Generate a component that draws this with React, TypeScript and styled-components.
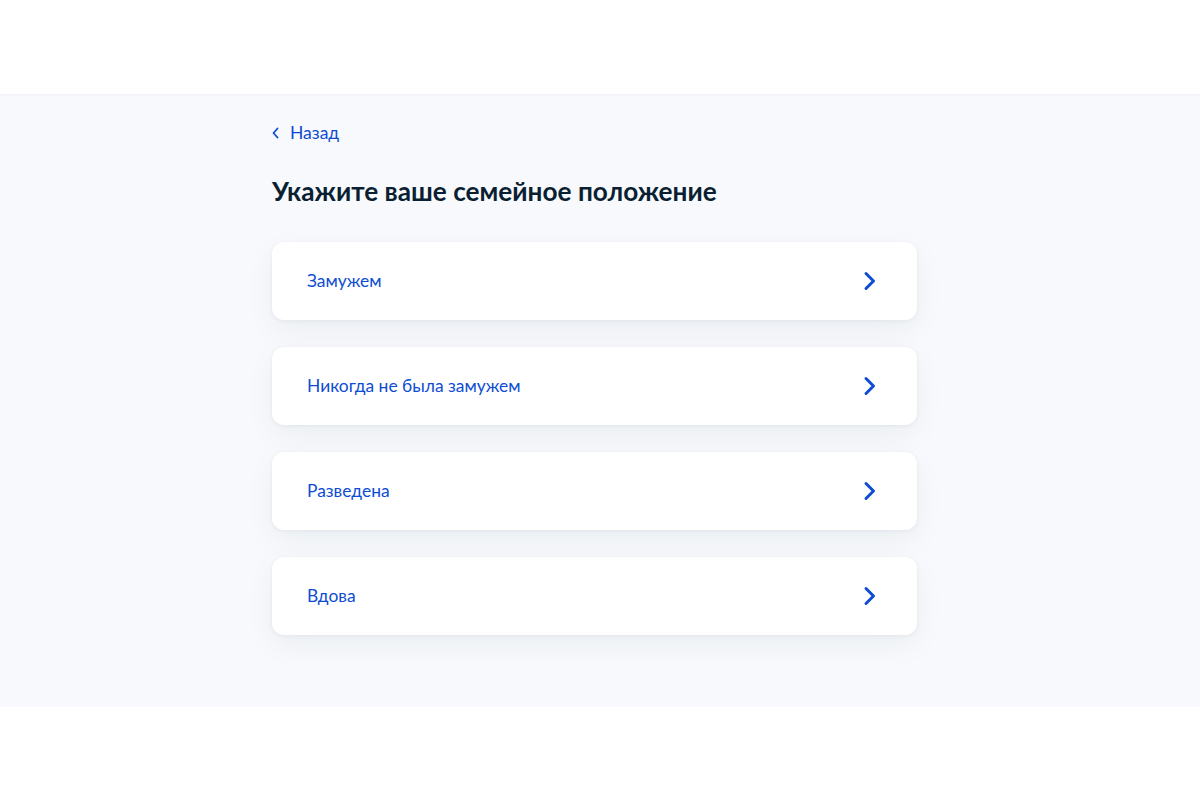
import React from 'react';
import styled, { createGlobalStyle } from 'styled-components';

const GlobalStyle = createGlobalStyle`
  html, body {
    margin: 0;
    padding: 0;
    background: #ffffff;
    font-family: Lato, "Noto Sans", sans-serif;
  }
`;

const Header = styled.header`
  height: 94px;
  background: #ffffff;
  box-shadow: 0 1px 2px rgba(11, 31, 51, 0.04);
  position: relative;
  z-index: 1;
`;

const Main = styled.main`
  background: #f7f9fc;
  padding: 27px 0 72px;
`;

const Column = styled.div`
  width: 645px;
  margin-left: 272px;
  display: flex;
  flex-direction: column;
`;

const BackLink = styled.a`
  display: inline-flex;
  align-items: center;
  gap: 11px;
  align-self: flex-start;
  color: #0d4cd3;
  font-size: 17.5px;
  line-height: 24px;
  text-decoration: none;
  cursor: pointer;
`;

const Title = styled.h1`
  margin: 30px 0 35px;
  font-size: 26.2px;
  line-height: 32px;
  font-weight: 700;
  color: #0b1f33;
`;

const List = styled.div`
  display: flex;
  flex-direction: column;
  gap: 27px;
`;

const Option = styled.button`
  height: 78px;
  display: flex;
  align-items: center;
  justify-content: space-between;
  padding: 0 36px 0 35px;
  border: none;
  border-radius: 12px;
  background: #ffffff;
  box-shadow: 0 1px 4px rgba(11, 31, 51, 0.06), 0 10px 30px rgba(11, 31, 51, 0.05);
  font-family: inherit;
  font-size: 17.4px;
  line-height: 24px;
  color: #0d4cd3;
  text-align: left;
  cursor: pointer;
`;

const Chevron = ({ size = 24, stroke = 3 }: { size?: number; stroke?: number }) => (
  <svg width={size} height={size} viewBox="0 0 24 24" fill="none">
    <path d="M9 4.5l7.5 7.5L9 19.5" stroke="#0d4cd3" strokeWidth={stroke} strokeLinecap="round" strokeLinejoin="round" />
  </svg>
);

const SmallChevron = () => (
  <svg width="7" height="12" viewBox="0 0 7 12" fill="none">
    <path d="M5.5 1.5L1.5 6l4 4.5" stroke="#0d4cd3" strokeWidth="1.8" strokeLinecap="round" strokeLinejoin="round" />
  </svg>
);

const options = ['Замужем', 'Никогда не была замужем', 'Разведена', 'Вдова'];

export default function App() {
  return (
    <>
      <GlobalStyle />
      <Header />
      <Main>
        <Column>
          <BackLink>
            <SmallChevron />
            Назад
          </BackLink>
          <Title>Укажите ваше семейное положение</Title>
          <List>
            {options.map((o) => (
              <Option key={o}>
                {o}
                <Chevron />
              </Option>
            ))}
          </List>
        </Column>
      </Main>
    </>
  );
}
